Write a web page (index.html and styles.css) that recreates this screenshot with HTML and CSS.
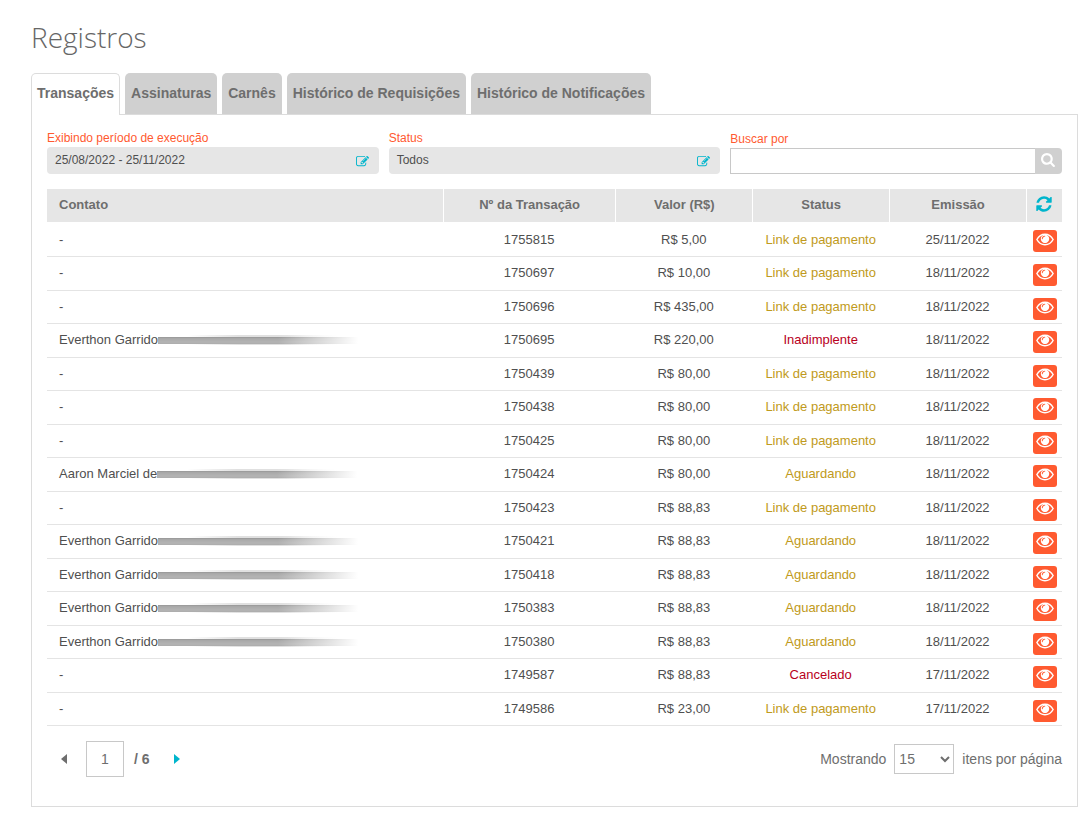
FILE: index.html
```
<!DOCTYPE html>
<html lang="pt-BR">
<head>
<meta charset="utf-8">
<title>Registros</title>
<link rel="stylesheet" href="styles.css">
</head>
<body>
<svg class="sprite" aria-hidden="true">
  <symbol id="i-search" viewBox="0 0 1792 1792"><path d="M1152 832q0-185-131.5-316.5t-316.5-131.5-316.5 131.5-131.5 316.5 131.5 316.5 316.5 131.5 316.5-131.5 131.5-316.5zm512 832q0 52-38 90t-90 38q-54 0-90-38l-343-342q-179 124-399 124-143 0-273.5-55.5t-225-150-150-225-55.5-273.5 55.5-273.5 150-225 225-150 273.5-55.5 273.5 55.5 225 150 150 225 55.5 273.5q0 220-124 399l343 343q37 37 37 90z"/></symbol>
  <symbol id="i-eye" viewBox="0 0 18 13"><path d="M.9 6.500C2.600 3.300 5.600 1.200 9 1.200s6.400 2.100 8.100 5.300C15.400 9.700 12.400 11.800 9 11.800S2.600 9.700.9 6.500z" fill="none" stroke="currentColor" stroke-width="1.500"/><path fill-rule="evenodd" d="M9 1.600a4.200 4.200 0 1 0 .01 0zM8.900 2.700q.5 0 .5.400t-.5.400q-1.900.2-2.200 2.200-.1.500-.5.500t-.4-.5q.3-2.800 3.100-3z"/></symbol>
  <symbol id="i-refresh" viewBox="0 0 1792 1792"><path d="M1639 1056q0 5-1 7-64 268-268 434.5t-478 166.5q-146 0-282.5-55t-243.5-157l-129 129q-19 19-45 19t-45-19-19-45v-448q0-26 19-45t45-19h448q26 0 45 19t19 45-19 45l-137 137q71 66 161 102t187 36q134 0 250-65t186-179q11-17 53-117 8-23 30-23h192q13 0 22.5 9.5t9.5 22.5zm25-800v448q0 26-19 45t-45 19h-448q-26 0-45-19t-19-45 19-45l138-138q-148-137-349-137-134 0-250 65t-186 179q-11 17-53 117-8 23-30 23h-199q-13 0-22.5-9.5t-9.5-22.5v-7q65-268 270-434.5t480-166.5q146 0 284 55.5t245 156.5l130-129q19-19 45-19t45 19 19 45z"/></symbol>
  <symbol id="i-edit" viewBox="0 0 1792 1792"><path d="M888 1184l116-116-152-152-116 116v56h96v96h56zm440-720q-16-16-33 1l-350 350q-17 17-1 33t33-1l350-350q17-17 1-33zm80 594v190q0 119-84.500 203.500t-203.500 84.500h-832q-119 0-203.500-84.500t-84.500-203.500v-832q0-119 84.500-203.500t203.500-84.500h832q63 0 117 25 15 7 18 23 3 17-9 29l-49 49q-14 14-32 8-23-6-45-6h-832q-66 0-113 47t-47 113v832q0 66 47 113t113 47h832q66 0 113-47t47-113v-126q0-13 9-22l64-64q15-15 35-7t20 29zm-96-738l288 288-672 672h-288v-288zm444 132l-92 92-288-288 92-92q28-28 68-28t68 28l152 152q28 28 28 68t-28 68z"/></symbol>
</svg>
<main class="page">
  <h1 class="title">Registros</h1>
  <nav class="tabs">
    <button class="tab tab-active" type="button">Transações</button>
    <button class="tab" type="button">Assinaturas</button>
    <button class="tab" type="button">Carnês</button>
    <button class="tab" type="button">Histórico de Requisições</button>
    <button class="tab" type="button">Histórico de Notificações</button>
  </nav>
  <section class="panel">
    <div class="filters">
      <div class="field">
        <label class="label" for="period">Exibindo período de execução</label>
        <button class="picker" id="period" type="button"><span>25/08/2022 - 25/11/2022</span><svg class="icon-edit" aria-hidden="true"><use href="#i-edit"/></svg></button>
      </div>
      <div class="field">
        <label class="label" for="status">Status</label>
        <button class="picker" id="status" type="button"><span>Todos</span><svg class="icon-edit" aria-hidden="true"><use href="#i-edit"/></svg></button>
      </div>
      <div class="field field-search">
        <label class="label" for="search">Buscar por</label>
        <div class="search"><input class="search-input" id="search" type="text"><button class="search-button" type="button" aria-label="Buscar"><svg class="icon-search" aria-hidden="true"><use href="#i-search"/></svg></button></div>
      </div>
    </div>
    <table class="records">
      <colgroup><col class="col-contact"><col class="col-number"><col class="col-value"><col class="col-value"><col class="col-value"><col class="col-action"></colgroup>
      <thead>
        <tr><th class="contact">Contato</th><th>Nº da Transação</th><th>Valor (R$)</th><th>Status</th><th>Emissão</th><th class="action"><button class="refresh" type="button" aria-label="Atualizar"><svg class="icon-refresh" aria-hidden="true"><use href="#i-refresh"/></svg></button></th></tr>
      </thead>
      <tbody id="rows"></tbody>
    </table>
    <footer class="footer">
      <div class="pager">
        <button class="arrow" type="button" aria-label="Página anterior"><svg class="icon-arrow" viewBox="0 0 6 10" aria-hidden="true"><path d="M6 0v10L0 5z"/></svg></button>
        <input class="page-input" type="text" value="1" aria-label="Página">
        <span class="page-total">/ 6</span>
        <button class="arrow arrow-next" type="button" aria-label="Próxima página"><svg class="icon-arrow" viewBox="0 0 6 10" aria-hidden="true"><path d="M0 0v10l6-5z"/></svg></button>
      </div>
      <div class="sizes">
        <label for="size">Mostrando</label>
        <select class="size-select" id="size"><option>15</option><option>30</option><option>50</option></select>
        <span>itens por página</span>
      </div>
    </footer>
  </section>
</main>
<script src="records.js"></script>
</body>
</html>
```
FILE: records.js
```
const records = [
  ["-", "1755815", "5,00", "Link de pagamento", "25/11/2022"],
  ["-", "1750697", "10,00", "Link de pagamento", "18/11/2022"],
  ["-", "1750696", "435,00", "Link de pagamento", "18/11/2022"],
  ["Everthon Garrido", "1750695", "220,00", "Inadimplente", "18/11/2022"],
  ["-", "1750439", "80,00", "Link de pagamento", "18/11/2022"],
  ["-", "1750438", "80,00", "Link de pagamento", "18/11/2022"],
  ["-", "1750425", "80,00", "Link de pagamento", "18/11/2022"],
  ["Aaron Marciel de", "1750424", "80,00", "Aguardando", "18/11/2022"],
  ["-", "1750423", "88,83", "Link de pagamento", "18/11/2022"],
  ["Everthon Garrido", "1750421", "88,83", "Aguardando", "18/11/2022"],
  ["Everthon Garrido", "1750418", "88,83", "Aguardando", "18/11/2022"],
  ["Everthon Garrido", "1750383", "88,83", "Aguardando", "18/11/2022"],
  ["Everthon Garrido", "1750380", "88,83", "Aguardando", "18/11/2022"],
  ["-", "1749587", "88,83", "Cancelado", "17/11/2022"],
  ["-", "1749586", "23,00", "Link de pagamento", "17/11/2022"]
];

const alerts = ["Inadimplente", "Cancelado"];

document.getElementById("rows").innerHTML = records.map(([name, id, value, status, date]) => `
  <tr>
    <td class="contact"><div class="person"><span>${name}</span>${name === "-" ? "" : '<span class="smudge"></span>'}</div></td>
    <td>${id}</td>
    <td>R$ ${value}</td>
    <td class="${alerts.includes(status) ? "status-alert" : "status-pending"}">${status}</td>
    <td>${date}</td>
    <td class="action"><button class="view" type="button" aria-label="Ver ${id}"><svg class="icon-eye" aria-hidden="true"><use href="#i-eye"/></svg></button></td>
  </tr>`).join("");
```
FILE: styles.css
```
* { box-sizing: border-box; }

body {
  margin: 0;
  background: #fff;
  color: #4f4f4f;
  font: 13px/18px "Liberation Sans", Arial, sans-serif;
}

button, input, select { font: inherit; color: inherit; margin: 0; }
button { border: 0; padding: 0; background: none; cursor: pointer; }
svg { display: block; fill: currentColor; }
.sprite { display: none; }

.page { padding: 17px 14px 18px 31px; }

.title {
  margin: 0 0 16px;
  color: #666;
  font: 300 28px/40px "Open Sans", sans-serif;
}

.tabs { display: flex; gap: 5px; }

.tab {
  height: 41px;
  padding: 0 6px 2px;
  border-radius: 5px 5px 0 0;
  background: #d0d0d0;
  color: #6e6e6e;
  font-size: 14px;
  font-weight: bold;
  white-space: nowrap;
}

.tab-active {
  height: 42px;
  margin-bottom: -1px;
  padding: 0 5px 4px;
  border: 1px solid #dcdcdc;
  border-bottom: 0;
  background: #fff;
  z-index: 1;
}

.panel { border: 1px solid #dcdcdc; padding: 14px 15px 29px; }

.filters {
  display: grid;
  grid-template-columns: repeat(3, 1fr);
  gap: 10px;
  margin-bottom: 15px;
}

.label { display: block; color: #ff5a30; font-size: 12px; }

.picker {
  display: flex;
  align-items: center;
  justify-content: space-between;
  width: 100%;
  height: 27px;
  padding: 0 10px 1px 8px;
  border-radius: 4px;
  background: #e6e6e6;
  font-size: 12px;
}

.field-search { padding-top: 1px; }
.search { display: flex; }

.search-input {
  flex: 1;
  min-width: 0;
  height: 26px;
  padding: 0 8px;
  border: 1px solid #c8c8c8;
  border-right: 0;
  border-radius: 0;
}

.search-button {
  display: flex;
  justify-content: center;
  width: 27px;
  padding-top: 4px;
  border-radius: 0 4px 4px 0;
  background: #d0d0d0;
  color: #fff;
}

.icon-edit { width: 13px; height: 13px; margin-top: 2px; color: #00b5cc; }
.icon-search { width: 15px; height: 15px; }
.icon-refresh { width: 18px; height: 18px; }
.icon-eye { width: 18px; height: 13px; }

.records { width: 100%; table-layout: fixed; border-collapse: separate; border-spacing: 0; }
.col-contact { width: 39%; }
.col-number { width: 17%; }
.col-action { width: 36px; }

.records th {
  height: 33px;
  padding: 0 0 2px;
  border-left: 1px solid #fff;
  background: #e6e6e6;
  color: #6e6e6e;
}

.records td {
  height: 33px;
  padding: 0;
  border-bottom: 1px solid #e4e4e4;
  text-align: center;
}

.records tr:nth-child(even) td { height: 34px; padding-bottom: 1px; }
.records tbody tr:first-child td { height: 35px; padding-top: 1px; }
.records .contact { border-left: 0; padding-left: 12px; text-align: left; }

.refresh { display: block; margin: 0 auto 0 8px; padding-bottom: 2px; color: #00b5cc; }

.view {
  display: flex;
  justify-content: center;
  width: 24px;
  height: 22px;
  margin: 3px auto 0 7px;
  padding-top: 3px;
  border-radius: 3px;
  background: #ff5a30;
  color: #fff;
}

.person { display: flex; align-items: center; }

.smudge {
  width: 200px;
  height: 12px;
  background:
    linear-gradient(90deg, transparent 60%, #fff 100%),
    linear-gradient(#9c9c9c 1px, #b4b4b4 2px, #a4a4a4 3px, #bababa 4px, #aaa 5px, #bababa 6px, #a2a2a2) 0 3px / 100% 7px no-repeat,
    linear-gradient(90deg, transparent 15%, #e0e0e0 40%, #e0e0e0 65%, transparent 90%) 0 1px / 100% 10px no-repeat;
}

.status-pending { color: #bf9a20; }
.status-alert { color: #b8001c; }

.footer {
  display: flex;
  align-items: center;
  justify-content: space-between;
  margin-top: 15px;
  color: #6e6e6e;
  font-size: 14px;
}

.pager { display: flex; align-items: center; }
.arrow { padding: 0 14px; }
.arrow-next { padding-left: 24px; color: #00b5cc; }
.icon-arrow { width: 6px; height: 10px; }

.page-input {
  width: 38px;
  height: 36px;
  margin: 0 10px 0 5px;
  padding: 0;
  border: 1px solid #c8c8c8;
  text-align: center;
}

.page-total { font-weight: bold; }
.sizes { display: flex; align-items: center; gap: 8px; }
.size-select { width: 60px; height: 30px; border: 1px solid #c8c8c8; border-radius: 0; background: #fff; }
```
